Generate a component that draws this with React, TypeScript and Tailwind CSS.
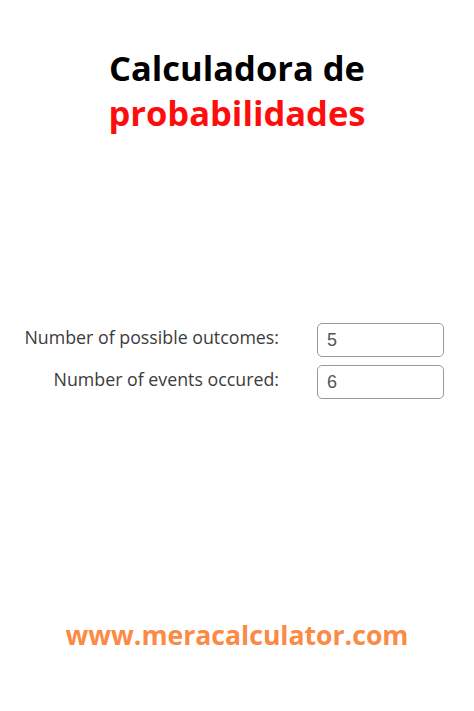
export default function App() {
  return (
    <div className="w-[474px] h-[711px] bg-white flex flex-col items-center" style={{ fontFamily: '"Open Sans", sans-serif' }}>
      <h1 className="mt-[45px] text-center font-bold text-[34.5px] leading-[45px] text-black">
        Calculadora de
        <br />
        <span className="text-[#ff0d0d]">probabilidades</span>
      </h1>
      <div className="mt-[188px] w-full flex flex-col gap-[8px]">
        <div className="flex items-center">
          <label className="w-[279px] text-right text-[17.8px] leading-[24px] text-[#3c3c3c] pb-[6px] whitespace-nowrap">Number of possible outcomes:</label>
          <input
            readOnly
            value="5"
            className="ml-[38px] w-[127px] h-[34px] border border-[#999] rounded-[5px] px-[9px] text-[18px] text-[#555]"
            style={{ fontFamily: '"Liberation Sans", Arial, sans-serif' }}
          />
        </div>
        <div className="flex items-center">
          <label className="w-[279px] text-right text-[17.8px] leading-[24px] text-[#3c3c3c] pb-[6px] whitespace-nowrap">Number of events occured:</label>
          <input
            readOnly
            value="6"
            className="ml-[38px] w-[127px] h-[34px] border border-[#999] rounded-[5px] px-[9px] text-[18px] text-[#555]"
            style={{ fontFamily: '"Liberation Sans", Arial, sans-serif' }}
          />
        </div>
      </div>
      <div className="mt-[217px] text-center font-bold text-[26.6px] text-[#fb8a45]">www.meracalculator.com</div>
    </div>
  )
}
